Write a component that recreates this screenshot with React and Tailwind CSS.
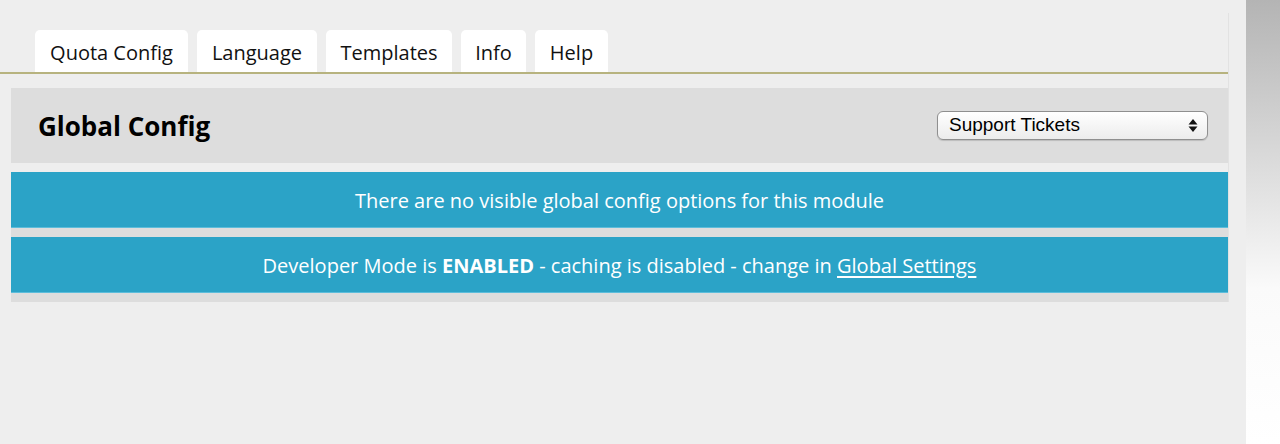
export default function App() {
  const tabs = [
    { label: "Quota Config", w: "w-[153px]" },
    { label: "Language", w: "w-[120px]" },
    { label: "Templates", w: "w-[126px]" },
    { label: "Info", w: "w-[65px]" },
    { label: "Help", w: "w-[73px]" },
  ];
  return (
    <div
      className="flex h-[444px] w-full bg-[#eeeeee] overflow-hidden"
      style={{ fontFamily: '"Open Sans", "Noto Sans", sans-serif' }}
    >
      <div className="w-[1246px] shrink-0">
        <div className="mt-[13px] w-[1229px] border-r border-[#e2e2e2]">
          <div className="flex gap-[9px] pl-[35px] pt-[17px]">
            {tabs.map((t) => (
              <div
                key={t.label}
                className={`${t.w} flex h-[42px] items-center justify-center rounded-t-[5px] bg-white pt-[3px] text-[20px] text-[#111]`}
              >
                {t.label}
              </div>
            ))}
          </div>
          <div className="h-[2px] bg-[#b7b37f]" />
          <div className="ml-[11px] pt-[14px]">
            <div className="flex h-[75px] items-center justify-between bg-[#dddddd] pl-[27px] pr-[20px]">
              <div className="pt-[2px] text-[26px] font-bold text-black">Global Config</div>
              <div
                className="flex h-[29px] w-[271px] items-center justify-between rounded-[6px] border border-[#8f8f8f] bg-gradient-to-b from-white to-[#ececec] pl-[11px] pr-[9px] text-[19px] text-black shadow-[0_1px_1px_rgba(0,0,0,0.15)]"
                style={{ fontFamily: '"Liberation Sans", Arial, sans-serif' }}
              >
                <span>Support Tickets</span>
                <svg width="10" height="15" viewBox="0 0 10 15">
                  <path d="M5 1 L9.5 6.5 L0.5 6.5 Z" fill="#111" />
                  <path d="M5 14 L9.5 8.5 L0.5 8.5 Z" fill="#111" />
                </svg>
              </div>
            </div>
            <div className="mt-[9px] bg-[#dddddd]">
              <div className="flex h-[56px] items-center justify-center border-b border-[#5cbddb] bg-[#2ba3c7] pt-[2px] text-[20px] text-white">
                There are no visible global config options for this module
              </div>
              <div className="h-[9px]" />
              <div className="flex h-[56px] items-center justify-center border-b border-[#5cbddb] bg-[#2ba3c7] pt-[2px] text-[20px] text-white">
                <span>
                  Developer Mode is <b className="font-bold">ENABLED</b> - caching is disabled - change in{" "}
                  <span className="underline underline-offset-[3px]">Global Settings</span>
                </span>
              </div>
              <div className="h-[9px]" />
            </div>
          </div>
        </div>
      </div>
      <div className="h-full flex-1 bg-gradient-to-b from-[#b4b4b4] via-[#fafafa] via-65% to-white" />
    </div>
  );
}
